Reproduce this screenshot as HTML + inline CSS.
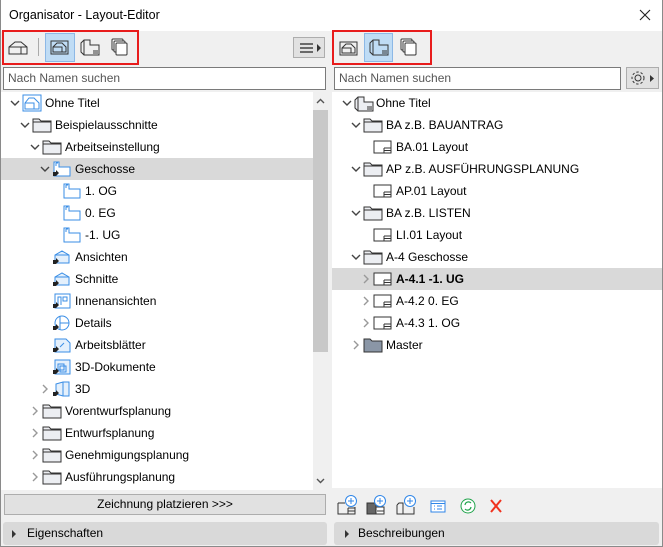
<!DOCTYPE html>
<html><head><meta charset="utf-8"><style>
*{box-sizing:border-box;margin:0;padding:0}
body{width:663px;height:547px;overflow:hidden;background:#f0f0f0;font-family:"Liberation Sans",sans-serif;font-size:12px;color:#000;position:relative}
.abs{position:absolute}
.frame{position:absolute;left:0;top:0;width:663px;height:547px;border:1px solid #8a8a8a;border-top:none;pointer-events:none}
.title{left:0;top:0;width:663px;height:31px;background:#fff}
.row{position:absolute;height:22px;line-height:22px;white-space:nowrap}
.row svg{position:absolute;top:3px}
.row svg.ch{position:absolute;top:0;left:0;width:10px;height:22px}
.search{background:#fff;border:1px solid #7a7a7a;height:23px;line-height:21px;padding-left:4px;color:#555}
.bar{background:#d9d9d9;border-radius:3px;height:23px;line-height:23px}
</style></head><body>
<div class="abs title"></div>
<div class="abs" style="left:9px;top:8px;font-size:12.5px">Organisator - Layout-Editor</div>
<svg class="abs" style="left:639px;top:9px" width="12" height="12"><path d="M1 1L11 11M11 1L1 11" stroke="#222" stroke-width="1.1"/></svg>

<!-- left toolbar -->
<div class="abs" style="left:2px;top:30px;width:137px;height:35px;border:2px solid #e81c1c"></div>
<svg class="abs" style="left:8px;top:40px" width="20" height="16"><path d="M1 14V7L7 2H13L19 7V14ZM1 7H13V14M13 7L19 7" fill="none" stroke="#333"/></svg>
<div class="abs" style="left:38px;top:38px;width:1px;height:18px;background:#aaa"></div>
<div class="abs" style="left:45px;top:33px;width:30px;height:29px;background:#bfdcf5;border:1px solid #8cb8e6"></div>
<svg class="abs" style="left:50px;top:39px" width="20" height="18"><rect x="1" y="2" width="17" height="13" fill="none" stroke="#333"/><path d="M3 13V8L7 4H12L16 8V13ZM3 8H12V13" fill="none" stroke="#333"/></svg>
<svg class="abs" style="left:80px;top:38px" width="20" height="19"><path d="M4 2H10V7H19V17H4L1 14V5Z" fill="none" stroke="#333"/><path d="M4 2V17M13 13H18M13 15H18" stroke="#333"/></svg>
<svg class="abs" style="left:111px;top:38px" width="18" height="19"><rect x="1" y="1" width="11" height="11" rx="1" fill="#fff" stroke="#333"/><rect x="3" y="3" width="11" height="11" rx="1" fill="#fff" stroke="#333"/><rect x="5" y="5" width="11" height="12" rx="1" fill="#fff" stroke="#333"/></svg>
<div class="abs" style="left:293px;top:37px;width:32px;height:21px;background:#e1e1e1;border:1px solid #adadad"></div>
<svg class="abs" style="left:299px;top:41px" width="24" height="14"><path d="M1 3H14M1 7H14M1 11H14" stroke="#222" stroke-width="1.2"/><path d="M18 3L22 7L18 11Z" fill="#333"/></svg>

<!-- right toolbar -->
<div class="abs" style="left:332px;top:30px;width:100px;height:35px;border:2px solid #e81c1c"></div>
<svg class="abs" style="left:339px;top:40px" width="20" height="16"><rect x="1" y="2" width="17" height="13" fill="none" stroke="#333"/><path d="M3 13V8L7 4H12L16 8V13ZM3 8H12V13" fill="none" stroke="#333"/></svg>
<div class="abs" style="left:364px;top:33px;width:29px;height:29px;background:#bfdcf5;border:1px solid #8cb8e6"></div>
<svg class="abs" style="left:369px;top:38px" width="20" height="19"><path d="M4 2H10V7H19V17H4L1 14V5Z" fill="none" stroke="#333"/><path d="M4 2V17M13 13H18M13 15H18" stroke="#333"/></svg>
<svg class="abs" style="left:400px;top:38px" width="18" height="19"><rect x="1" y="1" width="11" height="11" rx="1" fill="#fff" stroke="#333"/><rect x="3" y="3" width="11" height="11" rx="1" fill="#fff" stroke="#333"/><rect x="5" y="5" width="11" height="12" rx="1" fill="#fff" stroke="#333"/></svg>

<!-- search -->
<div class="abs search" style="left:3px;top:67px;width:323px">Nach Namen suchen</div>
<div class="abs search" style="left:334px;top:67px;width:287px">Nach Namen suchen</div>
<div class="abs" style="left:626px;top:67px;width:33px;height:22px;background:#e1e1e1;border:1px solid #adadad"></div>
<svg class="abs" style="left:629px;top:70px" width="28" height="17"><circle cx="9" cy="8" r="3" fill="none" stroke="#333"/><circle cx="9" cy="8" r="6" fill="none" stroke="#333" stroke-dasharray="2.4 2"/><path d="M21 5L25 8.5L21 12Z" fill="#333"/></svg>

<!-- left tree -->
<div class="abs" style="left:1px;top:92px;width:312px;height:398px;background:#fff"></div>
<div class="abs" style="left:313px;top:92px;width:15px;height:398px;background:#f0f0f0"></div>
<div class="abs" style="left:313px;top:110px;width:15px;height:242px;background:#c8c8c8"></div>
<svg class="abs" style="left:316px;top:98px" width="9" height="6"><path d="M1 5L4.5 1.5L8 5" fill="none" stroke="#555" stroke-width="1.4"/></svg>
<svg class="abs" style="left:316px;top:478px" width="9" height="6"><path d="M1 1L4.5 4.5L8 1" fill="none" stroke="#555" stroke-width="1.4"/></svg>
<div class="abs" style="left:1px;top:158px;width:312px;height:22px;background:#d9d9d9"></div>

<svg width="0" height="0" style="position:absolute"><defs>
<symbol id="dn" viewBox="0 0 10 22"><path d="M1 9L5 13L9 9" fill="none" stroke="#444" stroke-width="1.4"/></symbol>
<symbol id="rt" viewBox="0 0 10 22"><path d="M3 7L7 11L3 15" fill="none" stroke="#999" stroke-width="1.4"/></symbol>
<symbol id="fd" viewBox="0 0 20 16"><path d="M1 2H7L9 4H19V15H1Z" fill="#eceef2" stroke="#333"/><path d="M1 5H19" stroke="#333"/></symbol>
<symbol id="fdm" viewBox="0 0 20 16"><path d="M1 2H7L9 4H19V15H1Z" fill="#8a96a6" stroke="#333"/></symbol>
<symbol id="st" viewBox="0 0 20 16"><path d="M2 1H7V6H18V15H2Z" fill="#fff" stroke="#3a8ee6"/><path d="M4 2V5M4 2H6" stroke="#3a8ee6"/></symbol>
<symbol id="lay" viewBox="0 0 20 16"><rect x="1" y="2" width="17" height="12" fill="#fff" stroke="#333"/><path d="M11 9H18M11 9V14M11 11.5H18" stroke="#333"/></symbol>
<symbol id="ar" viewBox="0 0 20 16"><path d="M1 15V11H4V9L7 12L4 15Z" fill="#222"/></symbol>
</defs></svg>

<div class="row" style="left:10px;top:92px"><svg class="ch" width="10" height="22"><use href="#dn"/></svg><svg style="left:12px;top:2px" width="20" height="18"><rect x="1" y="1" width="18" height="16" fill="#fff" stroke="#3a8ee6"/><path d="M3 15V9L7 4H12L17 9V15ZM3 9H12V15" fill="none" stroke="#3a8ee6"/></svg><span style="position:absolute;left:35px">Ohne Titel</span></div>
<div class="row" style="left:20px;top:114px"><svg class="ch" width="10" height="22"><use href="#dn"/></svg><svg style="left:12px" width="20" height="16"><use href="#fd"/></svg><span style="position:absolute;left:35px">Beispielausschnitte</span></div>
<div class="row" style="left:30px;top:136px"><svg class="ch" width="10" height="22"><use href="#dn"/></svg><svg style="left:12px" width="20" height="16"><use href="#fd"/></svg><span style="position:absolute;left:35px">Arbeitseinstellung</span></div>
<div class="row" style="left:40px;top:158px"><svg class="ch" width="10" height="22"><use href="#dn"/></svg><svg style="left:12px" width="20" height="16"><use href="#st"/></svg><svg style="left:12px" width="20" height="16"><use href="#ar"/></svg><span style="position:absolute;left:35px">Geschosse</span></div>
<div class="row" style="left:50px;top:180px"><svg style="left:12px" width="20" height="16"><use href="#st"/></svg><span style="position:absolute;left:35px">1. OG</span></div>
<div class="row" style="left:50px;top:202px"><svg style="left:12px" width="20" height="16"><use href="#st"/></svg><span style="position:absolute;left:35px">0. EG</span></div>
<div class="row" style="left:50px;top:224px"><svg style="left:12px" width="20" height="16"><use href="#st"/></svg><span style="position:absolute;left:35px">-1. UG</span></div>
<div class="row" style="left:40px;top:246px"><svg style="left:12px" width="20" height="16"><path d="M3 14V6L10 2L17 6V14ZM3 6H17" fill="#e4f0fc" stroke="#3a8ee6"/><use href="#ar"/></svg><span style="position:absolute;left:35px">Ansichten</span></div>
<div class="row" style="left:40px;top:268px"><svg style="left:12px" width="20" height="16"><path d="M3 14V6L10 2L17 6V14ZM3 6H17" fill="#e4f0fc" stroke="#3a8ee6"/><use href="#ar"/></svg><span style="position:absolute;left:35px">Schnitte</span></div>
<div class="row" style="left:40px;top:290px"><svg style="left:12px" width="20" height="16"><rect x="3" y="1" width="15" height="14" fill="#fff" stroke="#3a8ee6"/><path d="M6 12V4H9V12M11 4H15V8H11Z" fill="none" stroke="#3a8ee6"/><use href="#ar"/></svg><span style="position:absolute;left:35px">Innenansichten</span></div>
<div class="row" style="left:40px;top:312px"><svg style="left:12px" width="20" height="16"><circle cx="10" cy="8" r="7" fill="#fff" stroke="#3a8ee6"/><path d="M8 1V15M8 8H17" stroke="#3a8ee6"/><use href="#ar"/></svg><span style="position:absolute;left:35px">Details</span></div>
<div class="row" style="left:40px;top:334px"><svg style="left:12px" width="20" height="16"><path d="M3 2H14L18 6V15H3Z" fill="#e4f0fc" stroke="#3a8ee6"/><path d="M8 10L12 6" stroke="#3a8ee6"/><use href="#ar"/></svg><span style="position:absolute;left:35px">Arbeitsblätter</span></div>
<div class="row" style="left:40px;top:356px"><svg style="left:12px" width="20" height="16"><rect x="3" y="1" width="15" height="14" fill="#e4f0fc" stroke="#3a8ee6"/><rect x="6" y="5" width="6" height="6" fill="none" stroke="#3a8ee6"/><rect x="8" y="7" width="6" height="6" fill="none" stroke="#3a8ee6"/><use href="#ar"/></svg><span style="position:absolute;left:35px">3D-Dokumente</span></div>
<div class="row" style="left:40px;top:378px"><svg class="ch" width="10" height="22"><use href="#rt"/></svg><svg style="left:12px" width="20" height="16"><path d="M4 3L11 1H17V15H11L4 13Z" fill="#e4f0fc" stroke="#3a8ee6"/><path d="M11 1V15" stroke="#3a8ee6"/><use href="#ar"/></svg><span style="position:absolute;left:35px">3D</span></div>
<div class="row" style="left:30px;top:400px"><svg class="ch" width="10" height="22"><use href="#rt"/></svg><svg style="left:12px" width="20" height="16"><use href="#fd"/></svg><span style="position:absolute;left:35px">Vorentwurfsplanung</span></div>
<div class="row" style="left:30px;top:422px"><svg class="ch" width="10" height="22"><use href="#rt"/></svg><svg style="left:12px" width="20" height="16"><use href="#fd"/></svg><span style="position:absolute;left:35px">Entwurfsplanung</span></div>
<div class="row" style="left:30px;top:444px"><svg class="ch" width="10" height="22"><use href="#rt"/></svg><svg style="left:12px" width="20" height="16"><use href="#fd"/></svg><span style="position:absolute;left:35px">Genehmigungsplanung</span></div>
<div class="row" style="left:30px;top:466px"><svg class="ch" width="10" height="22"><use href="#rt"/></svg><svg style="left:12px" width="20" height="16"><use href="#fd"/></svg><span style="position:absolute;left:35px">Ausführungsplanung</span></div>

<!-- right tree -->
<div class="abs" style="left:332px;top:92px;width:330px;height:396px;background:#fff"></div>
<div class="abs" style="left:332px;top:268px;width:330px;height:22px;background:#d9d9d9"></div>
<div class="row" style="left:342px;top:92px"><svg class="ch" width="10" height="22"><use href="#dn"/></svg><svg style="left:12px" width="20" height="17"><path d="M4 2H10V7H19V16H4L1 13V5Z" fill="#eceef2" stroke="#333"/><path d="M4 2V16M13 12H18M13 14H18" stroke="#333"/></svg><span style="position:absolute;left:34px">Ohne Titel</span></div>
<div class="row" style="left:351px;top:114px"><svg class="ch" width="10" height="22"><use href="#dn"/></svg><svg style="left:12px" width="20" height="16"><use href="#fd"/></svg><span style="position:absolute;left:35px">BA z.B. BAUANTRAG</span></div>
<div class="row" style="left:361px;top:136px"><svg style="left:12px" width="20" height="16"><use href="#lay"/></svg><span style="position:absolute;left:35px">BA.01 Layout</span></div>
<div class="row" style="left:351px;top:158px"><svg class="ch" width="10" height="22"><use href="#dn"/></svg><svg style="left:12px" width="20" height="16"><use href="#fd"/></svg><span style="position:absolute;left:35px">AP z.B. AUSFÜHRUNGSPLANUNG</span></div>
<div class="row" style="left:361px;top:180px"><svg style="left:12px" width="20" height="16"><use href="#lay"/></svg><span style="position:absolute;left:35px">AP.01 Layout</span></div>
<div class="row" style="left:351px;top:202px"><svg class="ch" width="10" height="22"><use href="#dn"/></svg><svg style="left:12px" width="20" height="16"><use href="#fd"/></svg><span style="position:absolute;left:35px">BA z.B. LISTEN</span></div>
<div class="row" style="left:361px;top:224px"><svg style="left:12px" width="20" height="16"><use href="#lay"/></svg><span style="position:absolute;left:35px">LI.01 Layout</span></div>
<div class="row" style="left:351px;top:246px"><svg class="ch" width="10" height="22"><use href="#dn"/></svg><svg style="left:12px" width="20" height="16"><use href="#fd"/></svg><span style="position:absolute;left:35px">A-4 Geschosse</span></div>
<div class="row" style="left:361px;top:268px"><svg class="ch" width="10" height="22"><use href="#rt"/></svg><svg style="left:12px" width="20" height="16"><use href="#lay"/></svg><span style="position:absolute;left:35px;font-weight:bold">A-4.1 -1. UG</span></div>
<div class="row" style="left:361px;top:290px"><svg class="ch" width="10" height="22"><use href="#rt"/></svg><svg style="left:12px" width="20" height="16"><use href="#lay"/></svg><span style="position:absolute;left:35px">A-4.2 0. EG</span></div>
<div class="row" style="left:361px;top:312px"><svg class="ch" width="10" height="22"><use href="#rt"/></svg><svg style="left:12px" width="20" height="16"><use href="#lay"/></svg><span style="position:absolute;left:35px">A-4.3 1. OG</span></div>
<div class="row" style="left:351px;top:334px"><svg class="ch" width="10" height="22"><use href="#rt"/></svg><svg style="left:12px" width="20" height="16"><use href="#fdm"/></svg><span style="position:absolute;left:35px">Master</span></div>

<!-- bottom left -->
<div class="abs" style="left:4px;top:494px;width:322px;height:21px;background:#e1e1e1;border:1px solid #adadad;text-align:center;line-height:19px">Zeichnung platzieren &gt;&gt;&gt;</div>
<div class="abs bar" style="left:3px;top:522px;width:324px"><svg class="abs" style="left:9px;top:8px" width="5" height="8"><path d="M0 0L4 4L0 8Z" fill="#333"/></svg><span style="position:absolute;left:24px">Eigenschaften</span></div>
<!-- bottom right -->
<svg class="abs" style="left:337px;top:494px" width="180" height="22">
<g fill="none" stroke="#333"><path d="M1 9H8M1 9V20H18V13" /><path d="M11 14H18M11 14V20M11 17H18"/></g><circle cx="14" cy="7" r="5.5" fill="#fff" stroke="#2f86e8"/><path d="M14 4V10M11 7H17" stroke="#2f86e8"/>
<g transform="translate(29,0)"><path d="M1 9H10V20H1Z" fill="#666" stroke="#333"/><path d="M10 13H18V20H10Z" fill="#fff" stroke="#333"/><path d="M11 17H18" stroke="#333"/><circle cx="14" cy="7" r="5.5" fill="#fff" stroke="#2f86e8"/><path d="M14 4V10M11 7H17" stroke="#2f86e8"/></g>
<g transform="translate(59,0)"><path d="M1 11L3 9H7V20H18V13M1 11V20H7" fill="none" stroke="#333"/><circle cx="14" cy="7" r="5.5" fill="#fff" stroke="#2f86e8"/><path d="M14 4V10M11 7H17" stroke="#2f86e8"/></g>
<g transform="translate(93,0)"><rect x="1" y="7" width="14" height="11" fill="#fff" stroke="#2f86e8"/><path d="M1 9.5H15M4 12H5M7 12H12M4 15H5M7 15H12" stroke="#2f86e8"/></g>
<g transform="translate(122,0)"><circle cx="9" cy="12" r="7" fill="#fff" stroke="#1fa34a"/><path d="M6 11A3.5 3.5 0 0 1 12 9M12 13A3.5 3.5 0 0 1 6 15" fill="none" stroke="#1fa34a" stroke-width="1.2"/></g>
<g transform="translate(152,0)"><path d="M2 6L12 18M12 6L2 18" stroke="#f0321e" stroke-width="2"/></g>
</svg>
<div class="abs bar" style="left:334px;top:522px;width:325px"><svg class="abs" style="left:11px;top:8px" width="5" height="8"><path d="M0 0L4 4L0 8Z" fill="#333"/></svg><span style="position:absolute;left:24px">Beschreibungen</span></div>
<div class="frame"></div>
</body></html>
